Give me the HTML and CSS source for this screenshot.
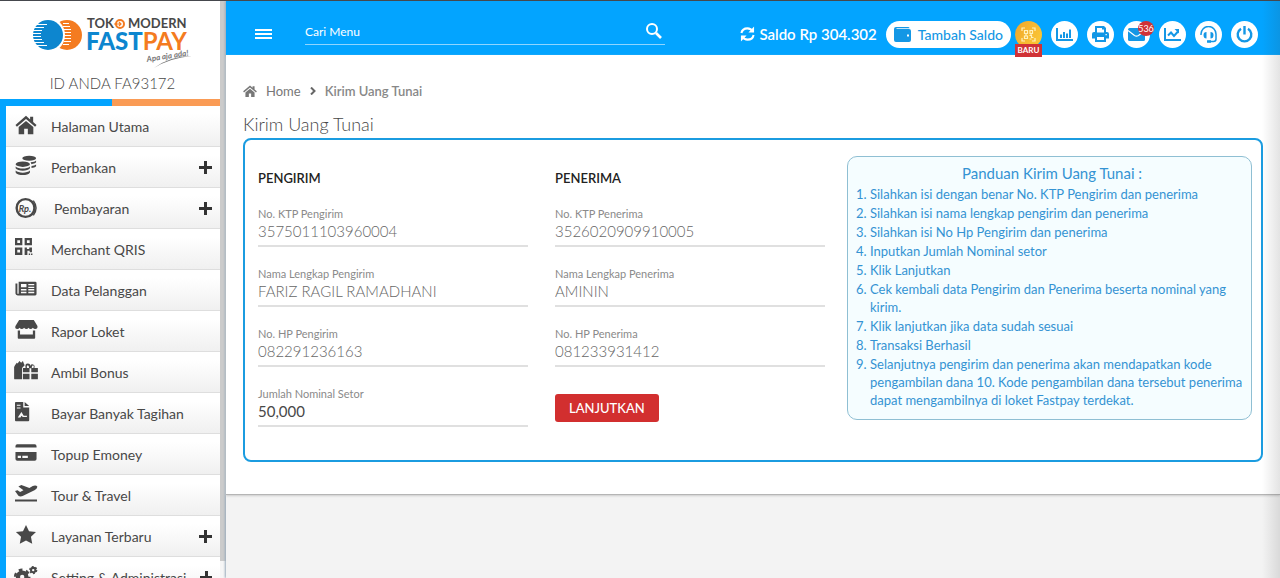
FILE: index.html
```html
<!DOCTYPE html>
<html lang="id">
<head>
<meta charset="utf-8">
<meta name="viewport" content="width=device-width, initial-scale=1">
<title>Kirim Uang Tunai</title>
<link rel="stylesheet" href="styles.css">
</head>
<body>
<div class="app">
  <aside class="sidebar">
    <div class="side-main">
      <div class="brand">
        <svg class="logo" width="166" height="56" viewBox="0 0 166 56" role="img" aria-label="Toko Modern Fastpay">
          <circle cx="34" cy="23" r="15" fill="#f47b20"/>
          <circle cx="14" cy="23" r="18" fill="#fff"/>
          <circle cx="15" cy="23" r="15" fill="#0d86cf"/>
          <path d="M0 12.500h14M0 15.500h11M0 18.500h9M0 21.500h8M0 24.500h8M0 27.500h9M0 30.500h11M0 33.500h14M30 11.500h6M30 14.500h7M31 17.500h7M31 20.500h7M31 23.500h7M31 26.500h7M31 29.500h7M30 32.500h6" stroke="#fff" stroke-width="1"/>
          <text x="54" y="16" class="logo-top">TOK</text>
          <circle cx="87" cy="12" r="4" fill="none" stroke="#f47b20" stroke-width="2"/>
          <path d="M81 12h7m-2-2 2 2-2 2" fill="none" stroke="#f47b20" stroke-width="1.200"/>
          <text x="95" y="16" class="logo-top">MODERN</text>
          <text x="53" y="38" class="logo-name">FAST<tspan class="logo-pay">PAY</tspan></text>
          <text x="114" y="50" class="logo-tag" transform="rotate(-9 114 50)">Apa aja ada!</text>
          <path d="M121 56q16-12 38-12-22 2-38 12z" fill="#777"/>
        </svg>
        <p class="brand-id">ID ANDA FA93172</p>
      </div>
      <div class="stripe"></div>
      <nav class="menu">
        <a href="#"><svg viewBox="0 0 24 24"><path d="M12 2 .5 12l1.600 2L12 5.500l9.900 8.500 1.600-2-3.700-3.300V3h-3.300v2.900zM12 7.500 4 14.300V22h6v-6h4v6h6v-7.700z"/></svg><span>Halaman Utama</span></a>
        <a href="#"><svg viewBox="0 0 24 24"><ellipse cx="15.500" cy="3.500" rx="7.500" ry="2.800"/><ellipse cx="8.500" cy="10" rx="7.800" ry="3"/><path d="M.7 12.500c3 3 12.600 3 15.600 0v2c-2 3.500-13.600 3.500-15.600 0zM.7 17c3 3 12.600 3 15.600 0v2c-2 3.800-13.600 3.800-15.600 0zM17 7.800c3 0 5-.8 6-1.800v2c-1 1.200-3 1.800-5 2zM18 12c2-.2 4-.8 5-1.700v2c-1 1.100-3 1.700-5 1.900z"/></svg><span>Perbankan</span><b class="plus"></b></a>
        <a href="#" class="wide"><svg viewBox="0 0 24 24"><path d="M20 4q6 8 0 16" fill="none" stroke="#484848" stroke-width="1.500"/><circle cx="11.500" cy="12" r="9.700" fill="none" stroke="#484848" stroke-width="2.600"/><text x="4" y="16" class="rp">Rp.</text></svg><span>Pembayaran</span><b class="plus"></b></a>
        <a href="#"><svg viewBox="0 0 24 24"><path fill-rule="evenodd" d="M0 1h8v8H0zm2.500 2.500v3h3v-3zM10.500 1h8v8h-8zM13 3.500v3h3v-3zM0 11.500h8v8H0zM2.500 14v3h3v-3zM10.500 11.500H13V13h2.500v-1.500h3v5H16V15h-2.500v4.500h-3zM15 18h1.500v1.500H15zm2.500 0H19v1.500h-1.500z"/></svg><span>Merchant QRIS</span></a>
        <a href="#"><svg viewBox="0 0 24 24"><path fill-rule="evenodd" d="M4 4h18q1.500 0 1.500 1.500v12Q23.500 19 22 19H3q-2.500 0-2.500-2V6H2.600V17q.7.800 1.400 0zM6.500 6.500V10h6V6.500zm8 0V8H21V6.500zm0 3V11H21V9.500zm-8 2.500v1.500h6V12zm8 0v1.500H21V12zm-8 3v1.500h6V15zm8 0v1.500H21V15z"/></svg><span>Data Pelanggan</span></a>
        <a href="#"><svg viewBox="0 0 24 24"><path d="M4.500 1h16l4 6.500q.5 3-2.500 3.300-1.500 0-2.500-1.300-1 1.300-2.500 1.300T14.800 9.500q-1 1.300-2.400 1.300T9.900 9.500q-1 1.300-2.500 1.300T5 9.500q-1 1.300-2.500 1.300Q-.5 10.500.5 7.500zM3 12.500h2.500V17h14v-4.500H22v8q0 1-1 1H4q-1 0-1-1z"/></svg><span>Rapor Loket</span></a>
        <a href="#"><svg viewBox="1 1 25 23"><path d="M1 6l2-3 1 1 2-3 2 2 2-2 1 3 1 2-3 3v13H1q-1 0-1-1V8zM10 9h3q-1-5 2.500-5T18 7q1-3 3.500-2T23 9h4v5h-7.500V9.500h-2V14H10zM14.500 9h2.500q0-3-1.500-3t-1 3zm5.500 0h2q1-3-.5-3T20 9zM10 15.500h7.500V22H10zM19.500 15.500H27V22h-7.500z"/></svg><span>Ambil Bonus</span></a>
        <a href="#"><svg viewBox="0 0 24 24"><path fill-rule="evenodd" d="M1 1h8v6h6.500v14q0 1-1 1H1q-1 0-1-1V2q0-1 1-1zm9.500 0L15.500 5.500h-5zM2 4v1.200h4V4zm0 3v1.200h4V7zm1 11h3l1-2 1.500 1.500H13V16H9.500L7 12z"/></svg><span>Bayar Banyak Tagihan</span></a>
        <a href="#"><svg viewBox="0 0 24 24"><path fill-rule="evenodd" d="M2.500 2.500h19q2 0 2 2V6H.5V4.500q0-2 2-2zM.5 11h23v7.500q0 2-2 2h-19q-2 0-2-2zM3 15v2.500h3.500V15zm5 0v2.500h6V15z"/></svg><span>Topup Emoney</span></a>
        <a href="#"><svg viewBox="1 1 26 22"><path d="M1 18.500h26V21H1zM1 8.500l3-1 3 2 4-2-6-4.500 3.500-1.500L18 5l4-2.500q4-1.500 5.500 1-.5 2.500-3.500 4L10 14.500q-3 1-5-.5z"/></svg><span>Tour &amp; Travel</span></a>
        <a href="#"><svg viewBox="0 0 24 24"><path d="m12 1 3.300 6.800 7.600 1-5.500 5.200 1.400 7.500-6.800-3.600-6.800 3.600L6.600 14 1 8.800l7.700-1z"/></svg><span>Layanan Terbaru</span><b class="plus"></b></a>
        <a href="#"><svg viewBox="1 0 26 24"><g fill="none" stroke="#484848"><circle cx="9.500" cy="13" r="5" stroke-width="5"/><circle cx="9.500" cy="13" r="8.300" stroke-width="3" stroke-dasharray="4.350"/><circle cx="22.500" cy="5" r="2.600" stroke-width="2.400"/><circle cx="22.500" cy="5" r="4.200" stroke-width="1.400" stroke-dasharray="2.200"/><circle cx="22.500" cy="19" r="2.600" stroke-width="2.400"/></g></svg><span>Setting &amp; Administrasi</span><b class="plus"></b></a>
      </nav>
    </div>
    <div class="track"><div class="thumb"></div></div>
  </aside>

  <div class="page">
    <header class="topbar">
      <button class="burger" type="button" aria-label="Menu"><i></i><i></i><i></i></button>
      <form class="search">
        <input type="search" placeholder="Cari Menu" aria-label="Cari Menu">
        <button type="button" aria-label="Cari"><svg width="18" height="18" viewBox="0 0 18 18" fill="none" stroke="#fff"><circle cx="7" cy="7" r="5" stroke-width="2"/><path d="m11 11 5 5" stroke-width="2.600"/></svg></button>
      </form>
      <div class="tools">
        <span class="balance"><svg width="15" height="16" viewBox="0 0 16 16" fill="none" stroke="#fff" stroke-width="2.200"><path d="M1.500 7q1-5 6.500-5 3.500 0 6 3.500M14.500 9q-1 5-6.500 5-3.500 0-6-3.500"/><path d="M15 0v6.500H9zM1 16V9.500h6z" fill="#fff" stroke="none"/></svg>Saldo Rp 304.302</span>
        <a class="topup" href="#"><svg width="17" height="15" viewBox="0 0 17 15"><path fill="#1497e5" fill-rule="evenodd" d="M2 0h12q1.500 0 1.500 1.200H2.500v.8H15q2 0 2 2v9q0 2-2 2H2q-2 0-2-2V2q0-2 2-2zm11 7.500v2h2v-2z"/></svg>Tambah Saldo</a>
        <div class="icons">
          <a class="round gold" href="#" aria-label="QRIS"><svg width="15" height="15" viewBox="0 0 15 15" fill="none" stroke="#fff1bd" stroke-width="1.200"><path d="M1 4V1h3M11 1h3v3M14 11v3h-3M4 14H1v-3M3.500 3.500h3v3h-3zM9 3.500h2.500v3H9zM3.500 9h3v2.500h-3zM8.500 8.500h2v2h2M8.500 12h2M5 6.500V9M10 6.500v2"/></svg><span class="new">BARU</span></a>
          <a class="round" href="#" aria-label="Statistik"><svg width="17" height="13" viewBox="0 0 17 13" fill="none" stroke="#1497e5" stroke-width="2"><path d="M1 0v12h16M5 10V6.500M8 10V4M11 10V5.500M14 10V1.500"/></svg></a>
          <a class="round" href="#" aria-label="Cetak"><svg width="17" height="16" viewBox="0 0 17 16"><path fill="#1497e5" fill-rule="evenodd" d="M3 0h9l2 2v4h1q2 0 2 2v4.500h-3V16H3v-3.500H0V8q0-2 2-2h1zm2 2v4.500h7V3.500h-2V2zm0 9v3h7v-3zm8.500-3v1.300h1.300V8z"/></svg></a>
          <a class="round" href="#" aria-label="Pesan"><svg width="17" height="13" viewBox="0 0 17 13"><rect width="17" height="13" rx="1.500" fill="#1497e5"/><path d="m0 2.500 6.500 5q2 1.300 4 0l6.500-5" fill="none" stroke="#fff" stroke-width="1.200"/></svg><span class="count">536</span></a>
          <a class="round" href="#" aria-label="Grafik"><svg width="17" height="13" viewBox="0 0 17 13" fill="none" stroke="#1497e5" stroke-width="2"><path d="M1 0v12h16M4 7.500l3-3L10 8l4-4.500"/><path d="M10.500 1H15v4.500z" fill="#1497e5" stroke="none"/></svg></a>
          <a class="round" href="#" aria-label="Bantuan"><svg width="17" height="17" viewBox="0 0 17 17" fill="none" stroke="#1497e5" stroke-width="1.500"><path d="M1 9V8a7.500 7.500 0 0 1 15 0v5q0 2.500-2.500 2.500H8"/><path d="M3.500 9q0-3 3-3v6.500q-3 0-3-3.500zM13.500 9q0-3-3-3v6.500q3 0 3-3.500z" fill="#1497e5" stroke="none"/><path d="M7 15.500h4" stroke-width="2.500"/></svg></a>
          <a class="round" href="#" aria-label="Keluar"><svg width="17" height="17" viewBox="0 0 17 17" fill="none" stroke="#1497e5" stroke-width="2.400"><path d="M5 2.700a6.800 6.800 0 1 0 7 0M8.500 0v8.500"/></svg></a>
        </div>
      </div>
    </header>

    <main class="content">
      <nav class="crumbs">
        <svg width="14" height="12" viewBox="0 1 24 21" fill="#777"><path d="M12 2 0 12l1.500 2L12 5.500 22.500 14l1.500-2-4-3.300V3h-3.500v2.700zM12 7.500 4 14v8h6v-6h4v6h6v-8z"/></svg>
        <a href="#">Home</a>
        <svg class="chev" width="6" height="8" viewBox="0 0 6 8" fill="none" stroke="#666" stroke-width="2"><path d="m1 .5 3.500 3.500L1 7.500"/></svg>
        <span class="here">Kirim Uang Tunai</span>
      </nav>
      <h1 class="title">Kirim Uang Tunai</h1>
      <div class="card">
        <form class="transfer">
          <fieldset class="party">
            <legend>PENGIRIM</legend>
            <div class="field"><label for="ktp1">No. KTP Pengirim</label><input id="ktp1" value="3575011103960004"></div>
            <div class="field"><label for="nama1">Nama Lengkap Pengirim</label><input id="nama1" value="FARIZ RAGIL RAMADHANI"></div>
            <div class="field"><label for="hp1">No. HP Pengirim</label><input id="hp1" value="082291236163"></div>
            <div class="field amount"><label for="jumlah">Jumlah Nominal Setor</label><input id="jumlah" value="50,000"></div>
          </fieldset>
          <fieldset class="party">
            <legend>PENERIMA</legend>
            <div class="field"><label for="ktp2">No. KTP Penerima</label><input id="ktp2" value="3526020909910005"></div>
            <div class="field"><label for="nama2">Nama Lengkap Penerima</label><input id="nama2" value="AMININ"></div>
            <div class="field"><label for="hp2">No. HP Penerima</label><input id="hp2" value="081233931412"></div>
            <button class="submit" type="button">LANJUTKAN</button>
          </fieldset>
        </form>
        <section class="guide">
          <h2>Panduan Kirim Uang Tunai :</h2>
          <ol>
            <li>Silahkan isi dengan benar No. KTP Pengirim dan penerima</li>
            <li>Silahkan isi nama lengkap pengirim dan penerima</li>
            <li>Silahkan isi No Hp Pengirim dan penerima</li>
            <li>Inputkan Jumlah Nominal setor</li>
            <li>Klik Lanjutkan</li>
            <li>Cek kembali data Pengirim dan Penerima beserta nominal yang kirim.</li>
            <li>Klik lanjutkan jika data sudah sesuai</li>
            <li>Transaksi Berhasil</li>
            <li>Selanjutnya pengirim dan penerima akan mendapatkan kode pengambilan dana 10. Kode pengambilan dana tersebut penerima dapat mengambilnya di loket Fastpay terdekat.</li>
          </ol>
        </section>
      </div>
    </main>
    <div class="edge"></div>
  </div>
</div>
</body>
</html>
```

FILE: styles.css
```css
* { box-sizing: border-box; }
body {
  margin: 0;
  background: #f3f3f3;
  color: #484848;
  font-family: Lato, "Liberation Sans", sans-serif;
  font-size: 14px;
}
a { color: inherit; text-decoration: none; }
button, input { font: inherit; }
button { border: 0; padding: 0; background: none; color: inherit; cursor: pointer; }

.app {
  display: flex;
  height: 100vh;
  overflow: hidden;
  border-top: 1px solid #45484d;
}

/* Sidebar */
.sidebar { display: flex; flex: none; width: 226px; overflow: hidden; background: #fff; }
.side-main { flex: 1; min-width: 0; }
.track { flex: none; width: 6px; background: #f6f6f6; }
.thumb { height: 97%; background: #cbcbcb; }
.brand { height: 98px; padding-top: 11px; text-align: center; }
.logo { display: block; margin-left: 33px; overflow: visible; }
.logo-top { font-size: 13px; font-weight: 700; fill: #484848; }
.logo-name { font-size: 24px; font-weight: 900; fill: #0d86cf; }
.logo-pay { font-weight: 700; fill: #f47b20; }
.logo-tag { font-size: 8px; font-weight: 700; font-style: italic; fill: #777; }
.brand-id { margin: 5px 0 0; padding-left: 5px; font-size: 15px; font-weight: 300; line-height: 20px; }
.stripe { height: 7px; background: linear-gradient(90deg, #03a4ff 51%, #fa9b55 51%); }
.menu { border-left: 6px solid #03a4ff; }
.menu a {
  display: flex;
  align-items: center;
  height: 41px;
  padding: 0 8px 0 9px;
  gap: 14px;
  border-bottom: 1px solid #dedede;
  background: linear-gradient(#fff 20%, #f0f0f0);
  white-space: nowrap;
}
.menu svg { flex: none; width: 22px; height: 22px; margin-bottom: 2px; fill: #484848; overflow: visible; }
.menu .wide { gap: 17px; }
.menu .wide svg { margin-bottom: 0; }
.rp { font-size: 10px; font-weight: 700; font-style: italic; }
.plus {
  width: 13px;
  height: 13px;
  margin-left: auto;
  background: linear-gradient(#333, #333) center / 13px 3px no-repeat, linear-gradient(#333, #333) center / 3px 13px no-repeat;
}

/* Top bar */
.page { position: relative; flex: 1; min-width: 0; box-shadow: -1px 0 2px #9ab; }
.topbar {
  display: flex;
  align-items: center;
  height: 54px;
  padding: 12px 22px 0 29px;
  background: #03a4ff;
  color: #fff;
}
.burger { display: grid; gap: 2px; width: 17px; }
.burger i { height: 2px; background: #fff; }
.search { display: flex; align-items: center; width: 360px; height: 26px; margin: 0 0 4px 33px; padding: 0 2px 2px 0; border-bottom: 1px solid #8fd5ff; }
.search input { flex: 1; min-width: 0; padding: 2px 0 0; border: 0; outline: 0; background: none; color: #fff; font-size: 12px; }
.search input::placeholder { color: #fff; opacity: 1; }
.search button { display: flex; }
.tools { display: flex; align-items: center; margin-left: auto; }
.balance { display: flex; align-items: center; gap: 4px; font-size: 15px; font-weight: 600; white-space: nowrap; }
.topup { display: flex; align-items: center; gap: 7px; height: 27px; margin: 0 4px 0 9px; padding: 0 8px; border-radius: 14px; background: #fff; color: #1497e5; font-weight: 500; white-space: nowrap; }
.icons { display: flex; gap: 9px; }
.round { position: relative; display: flex; align-items: center; justify-content: center; width: 27px; height: 27px; border-radius: 50%; background: #fff; }
.gold { background: linear-gradient(120deg, #f0a62c, #fccb36); }
.new { position: absolute; top: 23px; left: 0; width: 27px; background: #d03236; color: #fff; font-size: 8px; font-weight: 700; line-height: 13px; text-align: center; }
.count { position: absolute; top: 0; right: -4px; width: 16px; height: 15px; border-radius: 50%; background: #d03236; color: #fff; font-size: 9px; line-height: 15px; display: flex; justify-content: center; }

/* Content */
.content { padding: 27px 17px 32px; border-bottom: 1px solid #b5b5b5; background: #fff; box-shadow: 0 1px 2px #ccc; }
.crumbs { display: flex; align-items: center; height: 17px; color: #777; font-size: 13px; }
.crumbs a { margin-left: 9px; }
.chev { margin: 0 9px; }
.here { font-weight: 600; color: #888; }
.title { margin: 13px 0 2px; font-size: 18px; font-weight: 300; line-height: 24px; }
.card { display: grid; grid-template-columns: 7fr 5fr; align-items: start; gap: 22px; padding: 16px 9px 33px 13px; border: 2px solid #1b9ce0; border-radius: 8px; }
.transfer { display: grid; grid-template-columns: 1fr 1fr; gap: 27px; }
.party { min-width: 0; margin: 0; padding: 0; border: 0; }
.party legend { margin-bottom: 20px; padding: 13px 0 0; color: #222; font-size: 13px; font-weight: 600; line-height: 18px; }
.field { height: 40px; margin-bottom: 20px; border-bottom: 2px solid #e0e0e0; color: #8a8a8a; }
.field label { display: block; font-size: 11px; line-height: 14px; }
.field input { display: block; width: 100%; height: 20px; padding: 0; border: 0; outline: 0; background: none; color: #666; font-size: 15px; font-weight: 300; }
.party .field:last-child { margin-bottom: 0; }
.field.amount input { color: #484848; font-weight: 400; }
.submit { height: 28px; margin-top: 7px; padding: 0 14px; border-radius: 3px; background: #d22f2f; color: #fff; font-size: 13px; font-weight: 500; }
.guide { padding: 6px 4px 10px 9px; border: 1px solid #8fbfd3; border-radius: 10px; background: #f5fdff; color: #3493d3; }
.guide h2 { margin: 0 0 2px; font-size: 15px; font-weight: 400; line-height: 20px; text-align: center; }
.guide ol { display: grid; gap: 1px; margin: 0; padding-left: 13px; font-size: 13px; line-height: 18px; }
.edge { position: absolute; inset: 0 0 0 auto; width: 18px; background: linear-gradient(90deg, transparent, rgba(60, 60, 60, .14)); pointer-events: none; }
```
